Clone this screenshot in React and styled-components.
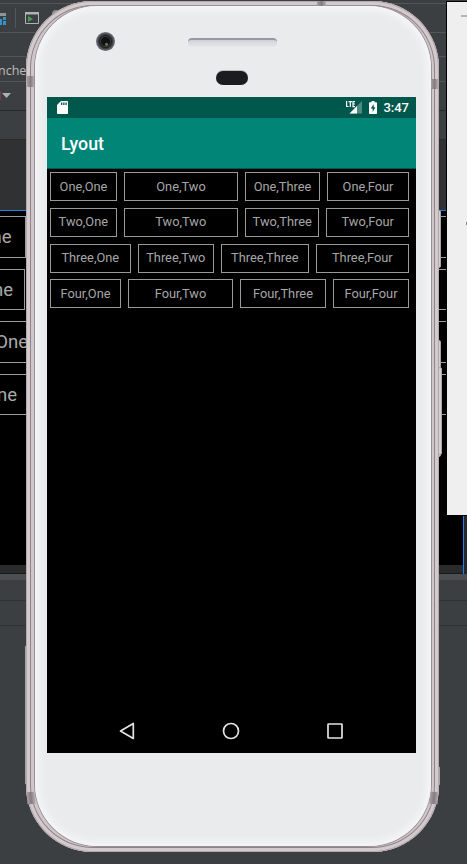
import React from 'react';
import styled, { createGlobalStyle } from 'styled-components';

const GlobalStyle = createGlobalStyle`
  *, *::before, *::after { box-sizing: border-box; }
  body { margin: 0; background: #3c3f41; font-family: Roboto, "Noto Sans", sans-serif; }
`;

const Desktop = styled.main`
  position: relative;
  width: 467px;
  height: 864px;
  overflow: hidden;
  background: #3c3f41;
`;

const Ide = styled.div`
  display: flex;
  flex-direction: column;
  height: 100%;
`;

const Bar = styled.div`
  display: flex;
  align-items: center;
  flex: none;
  height: ${p => p.$h}px;
  background: ${p => p.$bg || '#3c3f41'};
  border-bottom: 1px solid ${p => p.$line || '#555555'};
`;

const ToolSeparator = styled.span`
  width: 1px;
  height: 20px;
  margin: 0 9px;
  background: #555555;
`;

const TabLabel = styled.span`
  margin-left: -2px;
  padding-top: 3px;
  color: #bbbbbb;
  font: 12.5px/16px "Open Sans", sans-serif;
`;

const Preview = styled.section`
  flex: none;
  height: 354px;
  padding-top: 5px;
  display: flex;
  flex-direction: column;
  gap: 11px;
  background: #000;
`;

const PreviewRow = styled.div`
  display: flex;
  justify-content: space-between;
  height: 41.5px;
`;

const PreviewCell = styled.div`
  display: flex;
  align-items: center;
  justify-content: flex-end;
  width: ${p => p.$w}px;
  padding-top: 1px;
  padding-right: ${p => p.$pad || 0}px;
  border: 1px solid #9c9c9c;
  border-width: 1.5px 1px 1.5px 0;
  color: #aaaaaa;
  font-size: 18.5px;
  white-space: nowrap;
`;

const Gutter = styled.div`
  flex: none;
  height: 9px;
  background: #2b2b2b;
  border-bottom: 1px solid #191919;
`;

const SelectionEdge = styled.div`
  position: absolute;
  left: 463px;
  top: 516px;
  width: 4px;
  height: 58px;
  background: #24272b;
  border-left: 1px solid #2080ee;
`;

const SideWindow = styled.aside`
  position: absolute;
  left: 446px;
  top: 1px;
  width: 30px;
  height: 515px;
  background: #efefef;
  border: 1px solid #000;
  padding: 13px 0 0 14px;
`;

const MinimizeMark = styled.div`
  width: 12px;
  height: 2px;
  background: #a9b9be;
`;

const WindowMark = styled.div`
  width: 2px;
  height: 3px;
  margin: 205px 0 0 5px;
  background: #7d8f96;
`;

const SideKey = styled.div`
  position: absolute;
  left: ${p => p.$x}px;
  top: ${p => p.$y}px;
  width: ${p => p.$w}px;
  height: ${p => p.$h}px;
  background: #d5d0cf;
  border: 1px solid #a9a3a4;
  border-radius: 2px;
`;

const Phone = styled.div`
  position: absolute;
  left: 26px;
  top: 1px;
  width: 413px;
  height: 851px;
  padding: 5px 8px 6px 9px;
  border-radius: 67px;
  background: #cfc7ca;
  box-shadow: inset 0 0 0 1px #b3a9ad, inset 0 0 0 4px #d3cacd,
    inset 0 0 0 5px #8f8589, inset 0 0 0 7px #cfc6c9;
`;

const Face = styled.div`
  display: flex;
  flex-direction: column;
  align-items: center;
  height: 100%;
  padding-top: 91px;
  border-radius: 62px;
  background: #eaebed;
  box-shadow: 0 0 0 1px #9a9196, inset 0 0 7px 4px #f5f6f8;
`;

const Antenna = styled.div`
  position: absolute;
  left: ${p => p.$x}px;
  top: ${p => p.$y}px;
  width: ${p => p.$w}px;
  height: ${p => p.$h}px;
  background: linear-gradient(90deg, #aaa0a3, #847c80, #b4abae);
  transform: rotate(${p => p.$r || 0}deg);
`;

const Camera = styled.div`
  position: absolute;
  left: 70px;
  top: 31px;
  width: 19px;
  height: 19px;
  border-radius: 50%;
  background: radial-gradient(circle at 55% 65%, #786c39 0 1px, transparent 2px),
    radial-gradient(circle, #101114 0 4px, #35363b 5px, #202125 6px, #56575b 8px, #75767a 9.5px);
`;

const Speaker = styled.div`
  position: absolute;
  left: 162px;
  top: 37px;
  width: 89px;
  height: 9px;
  border-radius: 4px;
  border-top: 2px solid #929ba5;
  background: linear-gradient(#cfd2d5, #e6e7e9);
`;

const Sensor = styled.div`
  position: absolute;
  left: 190px;
  top: 70px;
  width: 32px;
  height: 14px;
  border-radius: 7px;
  background: #1b1c1f;
  box-shadow: 0 -1px 0 #b9bbbd;
`;

const Screen = styled.div`
  display: flex;
  flex-direction: column;
  flex: none;
  width: 369px;
  height: 656px;
  margin-right: 3px;
  background: #000;
`;

const StatusBar = styled.div`
  display: flex;
  align-items: center;
  justify-content: space-between;
  height: 21px;
  padding: 0 7px 0 10px;
  background: #00574b;
  color: #fff;
`;

const StatusGroup = styled.div`
  display: flex;
  align-items: center;
`;

const Clock = styled.span`
  margin-left: 6px;
  font: 500 13px/21px Roboto, sans-serif;
`;

const AppBar = styled.header`
  display: flex;
  align-items: center;
  height: 51px;
  padding: 2px 0 0 14px;
  border-bottom: 1px solid #00574b;
  background: #008577;
  color: #fff;
  font: 500 17.8px/24px Roboto, sans-serif;
`;

const Table = styled.div`
  display: flex;
  flex: 1;
  flex-direction: column;
  gap: 6.8px;
  padding: 3px 0 0 3px;
`;

const TableRow = styled.div`
  display: flex;
  height: 29px;
`;

const Cell = styled.div`
  display: flex;
  align-items: center;
  justify-content: center;
  width: ${p => p.$w}px;
  margin-right: ${p => p.$gap || 7}px;
  border: 1px solid #999999;
  color: #a6a6a6;
  font-size: 12.8px;
  line-height: 15px;
  padding-bottom: 1px;
  white-space: nowrap;
`;

const NavBar = styled.nav`
  display: flex;
  align-items: center;
  justify-content: space-between;
  height: 44px;
  padding: 0 72px 0 71px;
`;

const SignalSlot = styled.span`
  display: flex;
  margin-right: 6px;
`;

const previewRows = [
  { text: 'One,One', w: 25.5, pad: 13 },
  { text: 'Two,One', w: 25, pad: 11 },
  { text: 'Three,One', w: 45, pad: 16 },
  { text: 'Four,One', w: 30, pad: 12 },
];

const rows = [
  [['One,One', 67], ['One,Two', 114], ['One,Three', 75], ['One,Four', 82]],
  [['Two,One', 67], ['Two,Two', 115], ['Two,Three', 75], ['Two,Four', 83]],
  [['Three,One', 81], ['Three,Two', 77], ['Three,Three', 88], ['Three,Four', 94]],
  [['Four,One', 71], ['Four,Two', 105], ['Four,Three', 86], ['Four,Four', 76]],
];

function LayoutIcon() {
  return (
    <svg width="6" height="14" viewBox="0 0 6 14">
      <path d="M0 2h6v3H0z" fill="#8f9699" />
      <path d="M0 8h2v3H0zM3 6h3v3H3zM3 10h3v4H3zM0 11h2v3H0z" fill="#3592c4" />
    </svg>
  );
}

function RunIcon() {
  return (
    <svg width="14" height="12" viewBox="0 0 14 12">
      <path d="M.5 1v10.5h13V1z" fill="none" stroke="#afb1b3" />
      <path d="M0 0h14v2.5H0z" fill="#afb1b3" />
      <path d="M3 4l5 3-5 3z" fill="#499c54" />
    </svg>
  );
}

const DeviceDot = styled.span`
  width: 8px;
  height: 8px;
  margin: -8px 0 0 13px;
  border-radius: 50%;
  background: #8d9093;
`;

function FilterArrow() {
  return (
    <svg width="12" height="12" viewBox="0 0 12 12">
      <path d="M0 1h1v9H0z" fill="#803b40" />
      <path d="M2 3h9L6.500 8z" fill="#afb1b3" />
    </svg>
  );
}

function SdCard() {
  return (
    <svg width="11" height="13" viewBox="0 0 11 13">
      <path d="M4 0h6.2q.8 0 .8.800v11.400q0 .8-.8.800H.8Q0 13 0 12.200V4z" fill="#fff" />
      <path d="M4 1.500h1.300v2.500H4zM6.200 1.500h1.300v2.500H6.200zM8.400 1.500h1.300v2.500H8.400z" fill="#00574b" />
    </svg>
  );
}

function Signal() {
  return (
    <svg width="17" height="13" viewBox="0 0 17 13">
      <path d="M16 0v12.500H3.500z" fill="#4f8b81" />
      <path d="M11 5v7.500H3.500z" fill="#fff" />
      <path d="M.6 0v5.500h2M2.500 .6h3.500M4.300.5v5.500M9 .6H7v5h2M7 3h2" fill="none" stroke="#fff" strokeWidth="1.200" />
    </svg>
  );
}

function Battery() {
  return (
    <svg width="8" height="13" viewBox="0 0 8 13">
      <path d="M2.500 0h3v1.200h1.700q.8 0 .8.800v10.200q0 .8-.8.800H.8q-.8 0-.8-.8V2q0-.8.8-.8h1.700z" fill="#fff" />
      <path d="M4.700 3L1.800 7.500h1.900V11l2.700-4.700H4.700z" fill="#00574b" />
    </svg>
  );
}

function NavIcon({ children }) {
  return (
    <svg width="18" height="18" viewBox="0 0 18 18" fill="none" stroke="#e3e3e3" strokeWidth="1.700" strokeLinejoin="round">
      {children}
    </svg>
  );
}

export default function App() {
  return (
    <>
      <GlobalStyle />
      <Desktop>
        <Ide>
          <Bar $h={4} />
          <Bar $h={29}>
            <LayoutIcon />
            <ToolSeparator />
            <RunIcon />
            <DeviceDot />
          </Bar>
          <Bar $h={24} />
          <Bar $h={25}><TabLabel>ncher</TabLabel></Bar>
          <Bar $h={29} $line="#282828"><FilterArrow /></Bar>
          <Bar $h={29} $line="#2b2b2b" />
          <Bar $h={71} $bg="#2f3133" $line="#2080ee" />
          <Preview>
            {previewRows.map(r => (
              <PreviewRow key={r.text}>
                <PreviewCell $w={r.w} $pad={r.pad}>{r.text}</PreviewCell>
                <PreviewCell $w={30} />
              </PreviewRow>
            ))}
          </Preview>
          <Gutter />
          <Bar $h={6} $bg="#4b4f51" $line="#504b4d" />
          <Bar $h={21} $line="#2f3132" />
          <Bar $h={25} $line="#2f3132" />
        </Ide>
        <SelectionEdge />
        <SideWindow>
          <MinimizeMark />
          <WindowMark />
        </SideWindow>
        <SideKey $x={436} $y={210} $w={5} $h={58} />
        <SideKey $x={436} $y={340} $w={5} $h={117} />
        <SideKey $x={438} $y={367} $w={4} $h={88} />
        <SideKey $x={25} $y={645} $w={4} $h={140} />
        <SideKey $x={436} $y={766} $w={4} $h={20} />
        <Phone>
          <Antenna $x={1} $y={75} $w={7} $h={11} />
          <Antenna $x={405} $y={78} $w={7} $h={10} />
          <Antenna $x={291} $y={0} $w={9} $h={5} />
          <Antenna $x={1} $y={791} $w={8} $h={12} $r={-5} />
          <Antenna $x={404} $y={791} $w={8} $h={12} $r={5} />
          <Face>
            <Screen>
              <StatusBar>
                <SdCard />
                <StatusGroup>
                  <SignalSlot><Signal /></SignalSlot>
                  <Battery />
                  <Clock>3:47</Clock>
                </StatusGroup>
              </StatusBar>
              <AppBar>Lyout</AppBar>
              <Table>
                {rows.map((row, i) => (
                  <TableRow key={i}>
                    {row.map(([text, w, gap]) => <Cell key={text} $w={w} $gap={gap}>{text}</Cell>)}
                  </TableRow>
                ))}
              </Table>
              <NavBar>
                <NavIcon><path d="M15.300 1.500v15L2.500 9z" /></NavIcon>
                <NavIcon><circle cx="9" cy="9" r="7.500" /></NavIcon>
                <NavIcon><rect x="2" y="2" width="14" height="14" rx=".5" /></NavIcon>
              </NavBar>
            </Screen>
          </Face>
          <Camera />
          <Speaker />
          <Sensor />
        </Phone>
      </Desktop>
    </>
  );
}
